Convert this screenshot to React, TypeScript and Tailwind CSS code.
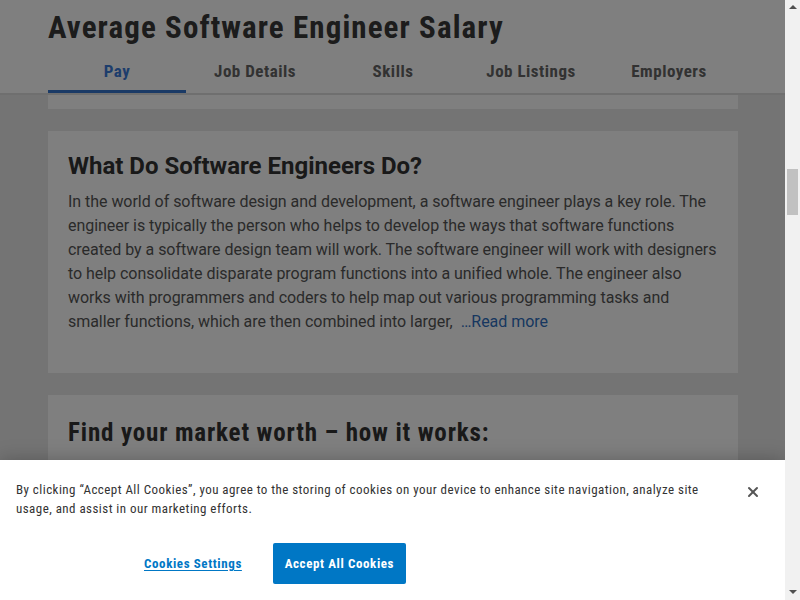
import { X } from "lucide-react"

const tabs = ["Pay", "Job Details", "Skills", "Job Listings", "Employers"]

export default function App() {
  return (
    <div className="flex h-[600px] w-[800px] overflow-hidden font-['Roboto',sans-serif]">
      <div className="relative flex-1 overflow-hidden bg-[#e9e9e9]">
        {/* Sticky header */}
        <div className="border-b-2 border-[#dedede] bg-white">
          <div className="mx-[48px]">
            <h1 className="pt-[10px] text-[31px] font-bold leading-[36px] tracking-[1.1px] text-[#383838] font-stretch-condensed">
              Average Software Engineer Salary
            </h1>
            <div className="mt-[7px] grid w-[690px] grid-cols-5">
              {tabs.map((t, i) => (
                <div
                  key={t}
                  className={
                    i === 0
                      ? "flex h-[40px] items-center justify-center border-b-[3px] border-[#3474cc] pt-[1px] text-[17px] font-bold tracking-[0.5px] text-[#3a7bd8] font-stretch-condensed"
                      : "flex h-[40px] items-center justify-center border-b-[3px] border-transparent pt-[1px] text-[17px] font-bold tracking-[0.5px] text-[#646464] font-stretch-condensed"
                  }
                >
                  {t}
                </div>
              ))}
            </div>
          </div>
        </div>

        {/* Content */}
        <div className="mx-[48px] w-[690px]">
          <div className="h-[14px] bg-white" />

          <div className="mt-[22px] h-[242px] bg-white pl-[20px] pr-[16px] pt-[21px]">
            <h2 className="text-[24px] font-bold leading-[28px] text-[#333]">What Do Software Engineers Do?</h2>
            <p className="mt-[10px] text-[16px] leading-[24px] tracking-[-0.04px] text-[#555]">
              In the world of software design and development, a software engineer plays a key role. The engineer is typically the person who helps to develop the ways that software functions created by a software design team will work. The software engineer will work with designers to help consolidate disparate program functions into a unified whole. The engineer also works with programmers and coders to help map out various programming tasks and smaller functions, which are then combined into larger,{" "}
              <span className="ml-[4px] text-[#2f6fc0]">…Read more</span>
            </p>
          </div>

          <div className="mt-[22px] h-[200px] bg-white px-[20px] pt-[23px]">
            <h2 className="text-[25px] font-bold leading-[30px] tracking-[0.85px] text-[#333] font-stretch-condensed">
              Find your market worth – how it works:
            </h2>
          </div>
        </div>

        {/* Dim overlay */}
        <div className="absolute inset-0 bg-black/50" />

        {/* Cookie banner */}
        <div className="absolute bottom-0 left-0 right-0 h-[140px] bg-white shadow-[0_0_18px_rgba(0,0,0,0.25)]">
          <div className="flex items-start">
            <p className="w-[712px] pl-[16px] pt-[20px] text-[13px] leading-[19px] tracking-[0.45px] text-[#333] font-stretch-condensed">
              By clicking “Accept All Cookies”, you agree to the storing of cookies on your device to enhance site navigation, analyze site usage, and assist in our marketing efforts.
            </p>
            <button className="ml-auto mr-[24px] mt-[24px] flex h-[16px] w-[16px] items-center justify-center text-[#555]">
              <X size={16} strokeWidth={3} />
            </button>
          </div>
          <div className="mt-[25px] flex items-center pl-[144px]">
            <a className="text-[13px] font-bold tracking-[0.6px] text-[#0077c5] underline underline-offset-2 font-stretch-condensed">
              Cookies Settings
            </a>
            <button className="ml-[31px] h-[41px] w-[133px] rounded-[2px] bg-[#0077c5] text-[13px] font-bold tracking-[0.6px] text-white font-stretch-condensed">
              Accept All Cookies
            </button>
          </div>
        </div>
      </div>

      {/* Scrollbar */}
      <div className="flex w-[15px] flex-col items-center bg-[#f1f1f1]">
        <div className="mt-[5px] h-0 w-0 border-x-[4px] border-b-[4px] border-x-transparent border-b-[#505050]" />
        <div className="mt-[160px] h-[46px] w-[11px] bg-[#c1c1c1]" />
        <div className="mt-auto mb-[6px] h-0 w-0 border-x-[4px] border-t-[4px] border-x-transparent border-t-[#505050]" />
      </div>
    </div>
  )
}
